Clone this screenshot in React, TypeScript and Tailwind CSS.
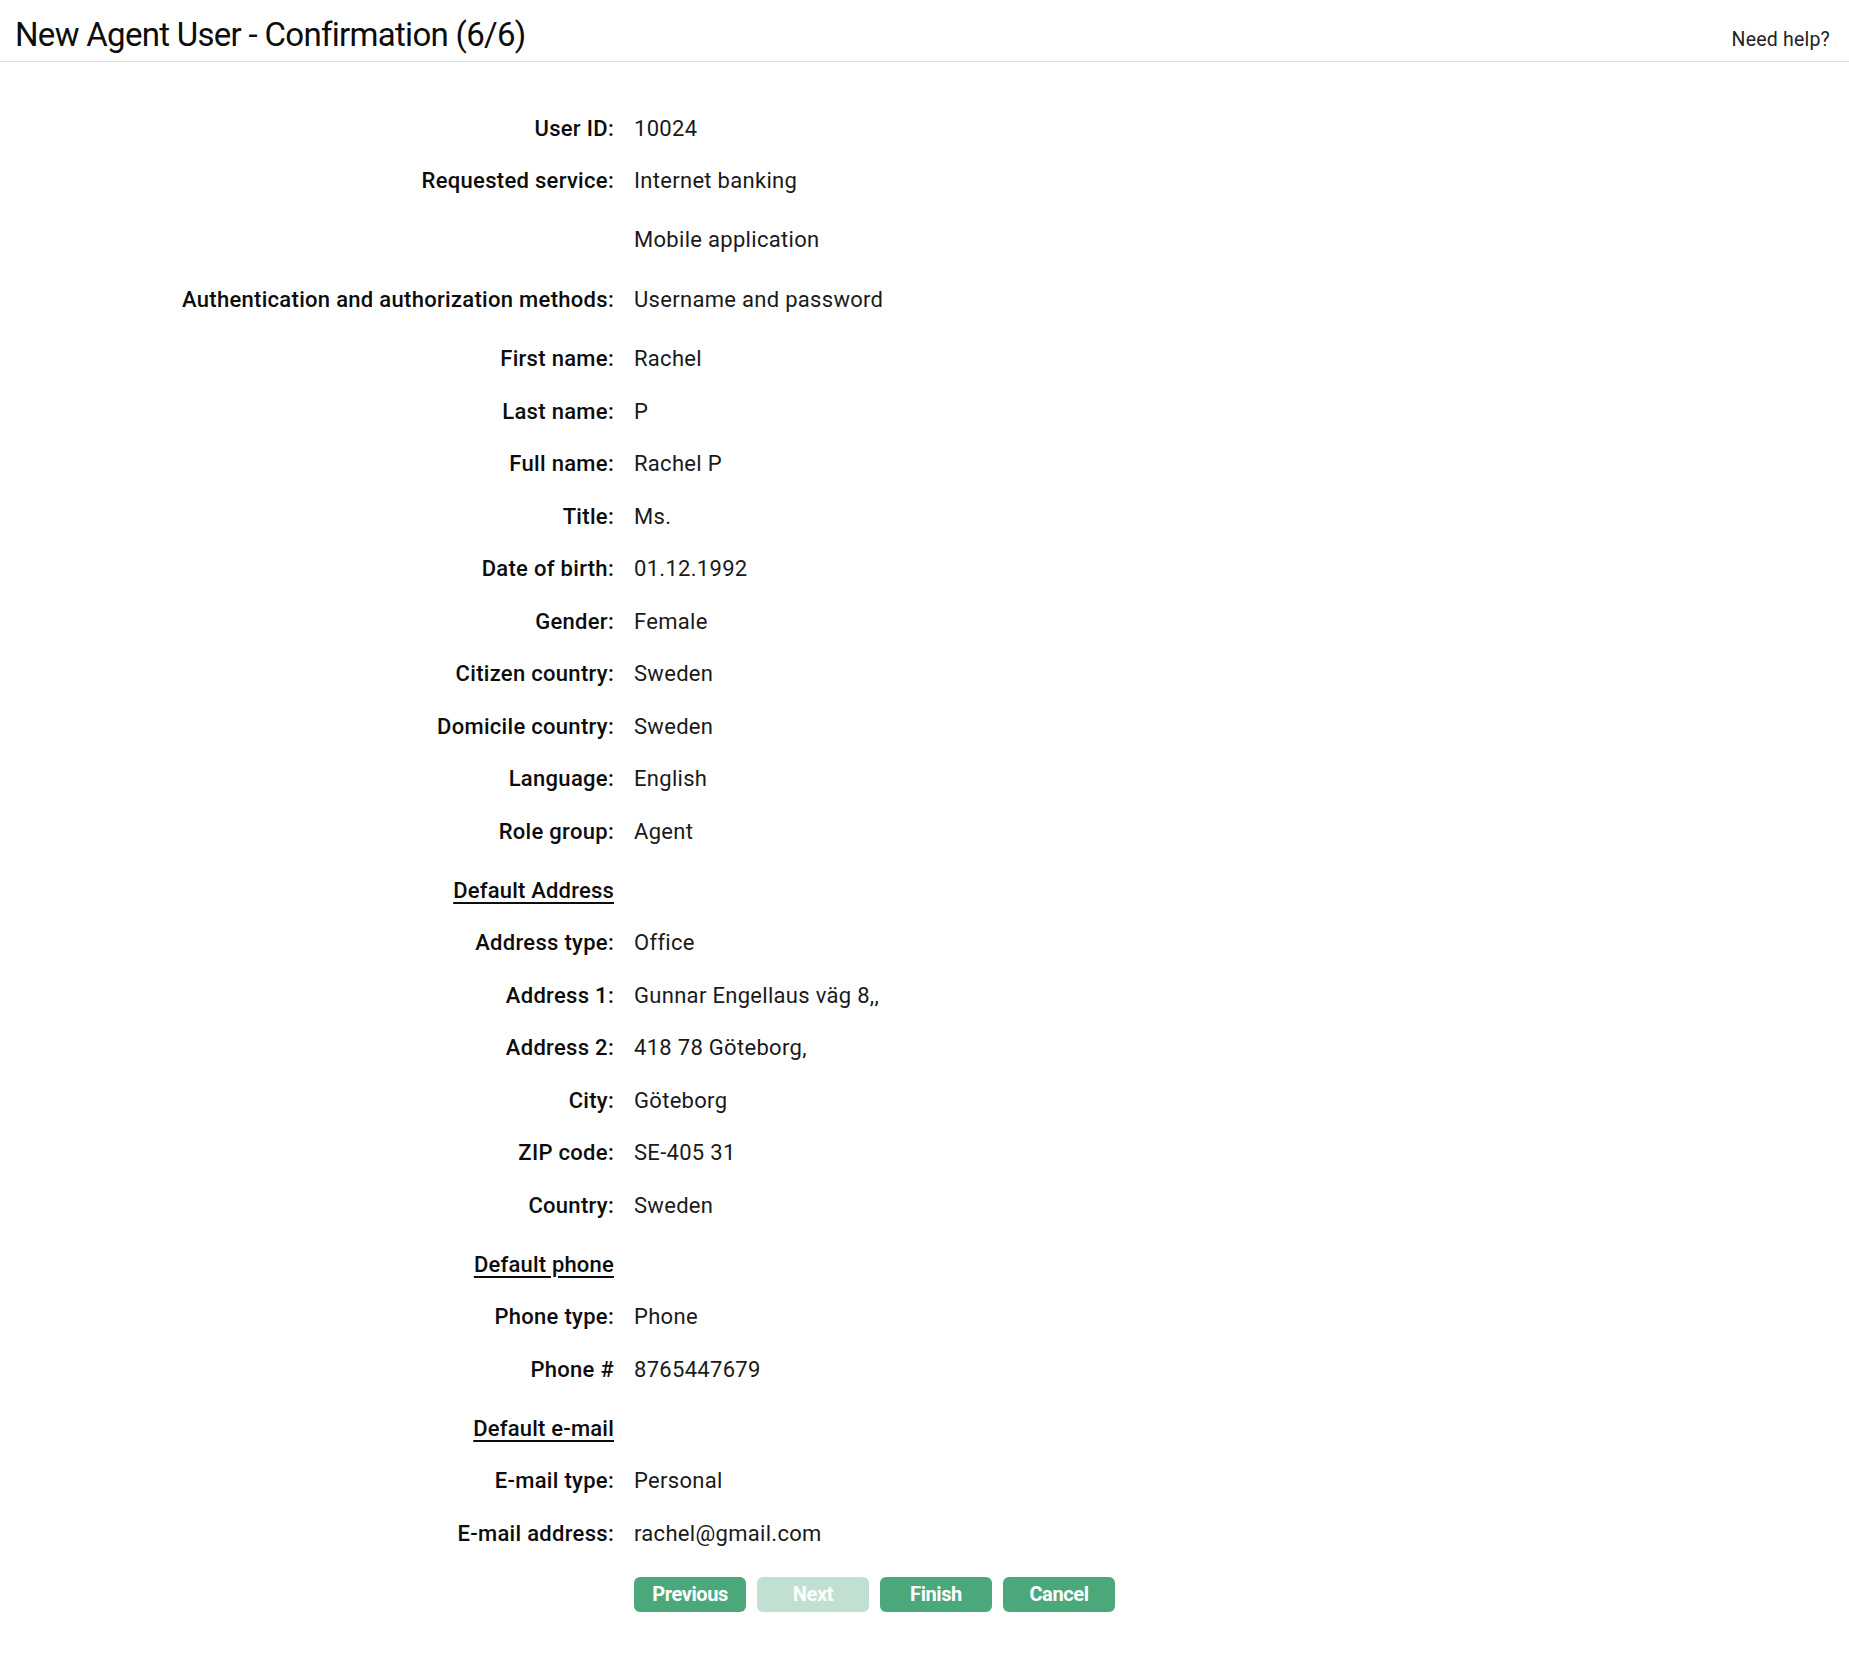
const font = "font-['Roboto','Liberation_Sans',sans-serif]";

type Row =
  | { kind: "field"; label: string; values: string[]; extra?: boolean }
  | { kind: "section"; label: string };

const ROWS: Row[] = [
  { kind: "field", label: "User ID:", values: ["10024"] },
  { kind: "field", label: "Requested service:", values: ["Internet banking", "Mobile application"] },
  { kind: "field", label: "Authentication and authorization methods:", values: ["Username and password"], extra: true },
  { kind: "field", label: "First name:", values: ["Rachel"], extra: true },
  { kind: "field", label: "Last name:", values: ["P"] },
  { kind: "field", label: "Full name:", values: ["Rachel P"] },
  { kind: "field", label: "Title:", values: ["Ms."] },
  { kind: "field", label: "Date of birth:", values: ["01.12.1992"] },
  { kind: "field", label: "Gender:", values: ["Female"] },
  { kind: "field", label: "Citizen country:", values: ["Sweden"] },
  { kind: "field", label: "Domicile country:", values: ["Sweden"] },
  { kind: "field", label: "Language:", values: ["English"] },
  { kind: "field", label: "Role group:", values: ["Agent"] },
  { kind: "section", label: "Default Address" },
  { kind: "field", label: "Address type:", values: ["Office"] },
  { kind: "field", label: "Address 1:", values: ["Gunnar Engellaus väg 8,,"] },
  { kind: "field", label: "Address 2:", values: ["418 78 Göteborg,"] },
  { kind: "field", label: "City:", values: ["Göteborg"] },
  { kind: "field", label: "ZIP code:", values: ["SE-405 31"] },
  { kind: "field", label: "Country:", values: ["Sweden"] },
  { kind: "section", label: "Default phone" },
  { kind: "field", label: "Phone type:", values: ["Phone"] },
  { kind: "field", label: "Phone #", values: ["8765447679"] },
  { kind: "section", label: "Default e-mail" },
  { kind: "field", label: "E-mail type:", values: ["Personal"] },
  { kind: "field", label: "E-mail address:", values: ["rachel@gmail.com"] },
];

function Field({ label, values, extra }: { label: string; values: string[]; extra?: boolean }) {
  return (
    <div className={`flex ${extra ? "mt-[7px]" : ""}`}>
      <div className="w-[614px] shrink-0 h-[52.5px] flex items-center justify-end text-[22px] font-medium tracking-[0.3px] text-[#0d0d0d]">
        {label}
      </div>
      <div className="ml-[20px] flex flex-col gap-[6.5px]">
        {values.map((v) => (
          <div key={v} className="h-[52.5px] flex items-center text-[22px] tracking-[0.3px] text-[#1a1a1a]">
            {v}
          </div>
        ))}
      </div>
    </div>
  );
}

function Section({ label }: { label: string }) {
  return (
    <div className="flex mt-[6.5px]">
      <div className="w-[614px] shrink-0 h-[52.5px] flex items-center justify-end text-[22px] font-medium tracking-[0.2px] text-[#0d0d0d]">
        <span className="underline underline-offset-[4px] decoration-[2px]">{label}</span>
      </div>
    </div>
  );
}

function Btn({ children, disabled }: { children: React.ReactNode; disabled?: boolean }) {
  return (
    <button
      disabled={disabled}
      className={`w-[112px] h-[35px] rounded-[6px] text-white text-[20px] font-bold tracking-[-0.4px] ${
        disabled ? "bg-[#c2e0d2]" : "bg-[#4ba87b]"
      }`}
    >
      {children}
    </button>
  );
}

export default function App() {
  return (
    <div className={`${font} min-h-[1657px] bg-white text-[#111]`}>
      <header className="h-[62px] border-b border-[#dedede] flex items-start justify-between pl-[15px] pr-[19px]">
        <h1 className="text-[33px] leading-none mt-[18px] tracking-[-0.7px] text-[#0d0d0d]">
          New Agent User - Confirmation (6/6)
        </h1>
        <a className="text-[19.5px] mt-[30px] leading-none tracking-[0.2px] text-[#222]">Need help?</a>
      </header>

      <div className="pt-[40px]">
        {ROWS.map((r, i) =>
          r.kind === "field" ? (
            <Field key={i} label={r.label} values={r.values} extra={r.extra} />
          ) : (
            <Section key={i} label={r.label} />
          )
        )}
        <div className="flex mt-[13px]">
          <div className="w-[634px] shrink-0" />
          <div className="flex gap-[11px] pt-[4px]">
            <Btn>Previous</Btn>
            <Btn disabled>Next</Btn>
            <Btn>Finish</Btn>
            <Btn>Cancel</Btn>
          </div>
        </div>
      </div>
    </div>
  );
}
